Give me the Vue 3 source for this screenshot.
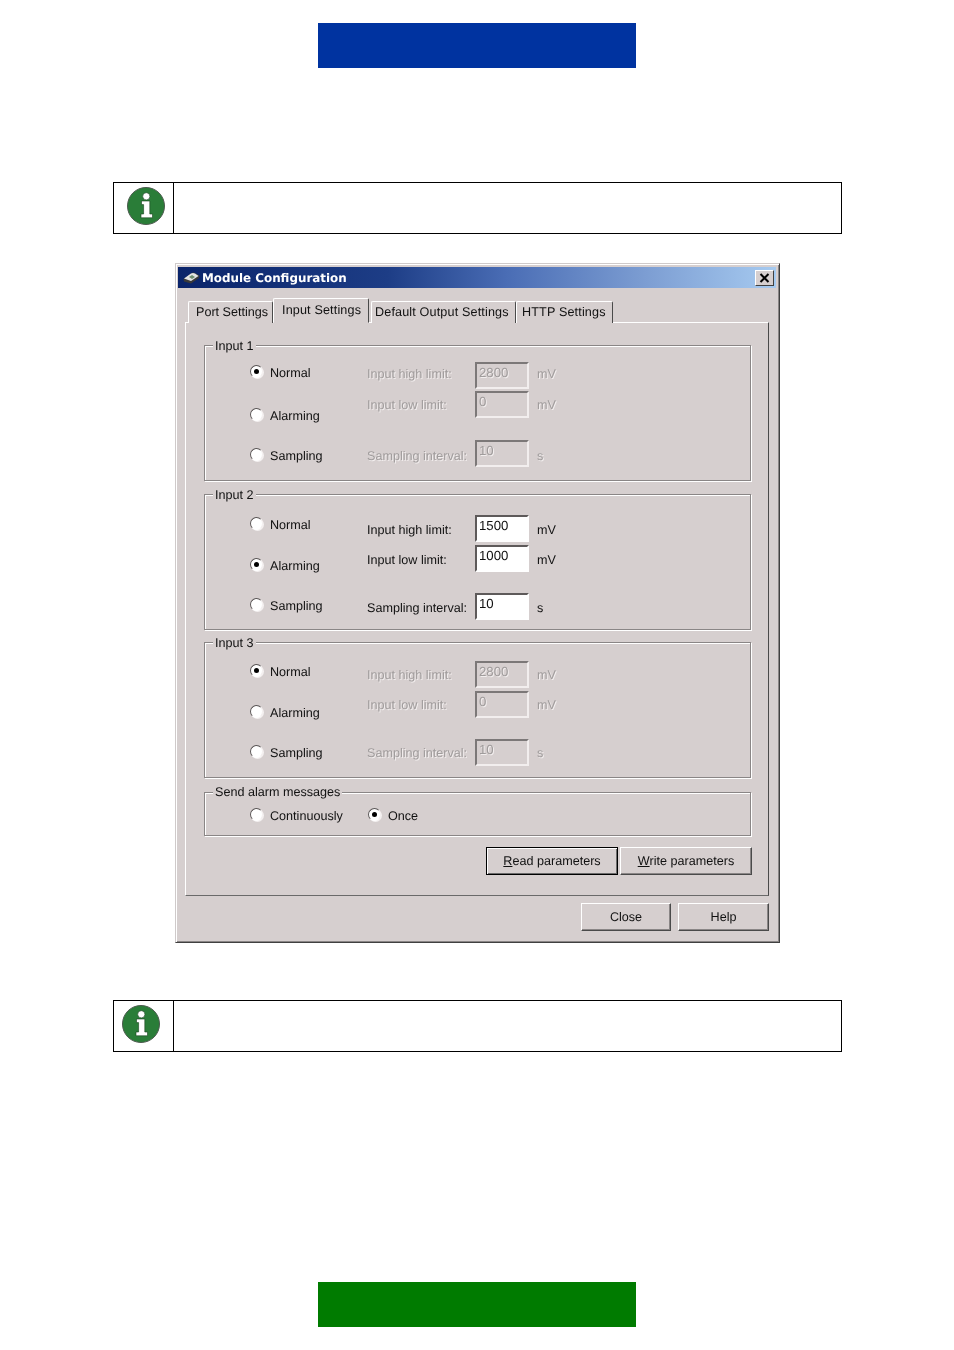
<script setup>
const groups = [
  {
    title: 'Input 1',
    disabled: true,
    radios: [
      { label: 'Normal', on: true, gap: 17 },
      { label: 'Alarming', gap: 23 },
      { label: 'Sampling', gap: 20 }
    ],
    fields: [
      { label: 'Input high limit:', value: '2800', unit: 'mV', gap: 16, up: 4, down: 0 },
      { label: 'Input low limit:', value: '0', unit: 'mV', gap: 2, up: 0, down: 0 },
      { label: 'Sampling interval:', value: '10', unit: 's', gap: 22, up: 0, down: 4 }
    ]
  },
  {
    title: 'Input 2',
    disabled: false,
    radios: [
      { label: 'Normal', gap: 20 },
      { label: 'Alarming', on: true, gap: 21 },
      { label: 'Sampling', gap: 20 }
    ],
    fields: [
      { label: 'Input high limit:', value: '1500', unit: 'mV', gap: 20, up: 0, down: 2 },
      { label: 'Input low limit:', value: '1000', unit: 'mV', gap: 3, up: 0, down: 2 },
      { label: 'Sampling interval:', value: '10', unit: 's', gap: 21, up: 0, down: 2 }
    ]
  },
  {
    title: 'Input 3',
    disabled: true,
    radios: [
      { label: 'Normal', on: true, gap: 19 },
      { label: 'Alarming', gap: 21 },
      { label: 'Sampling', gap: 20 }
    ],
    fields: [
      { label: 'Input high limit:', value: '2800', unit: 'mV', gap: 18, up: 0, down: 0 },
      { label: 'Input low limit:', value: '0', unit: 'mV', gap: 3, up: 0, down: 0 },
      { label: 'Sampling interval:', value: '10', unit: 's', gap: 21, up: 0, down: 0 }
    ]
  }
]

const tabs = [
  { label: 'Port Settings', width: 85, pad: 7 },
  { label: 'Input Settings', width: 96, pad: 8, active: true },
  { label: 'Default Output Settings', width: 145, pad: 3 },
  { label: 'HTTP Settings', width: 97, pad: 5 }
]

const textShift = (field) => ({
  paddingBottom: field.up + 'px',
  paddingTop: field.down + 'px'
})
</script>

<template>
  <div class="page">
    <div class="bar bar-blue"></div>

    <div class="note note-first">
      <div class="note-icon icon-a">
        <svg width="38" height="38" viewBox="0 0 38 38">
          <circle cx="19" cy="19" r="18.500" fill="#2a7d38" stroke="#4c5a4e" stroke-width="1" />
          <circle cx="19.300" cy="9.300" r="3.600" fill="#fff" stroke="#173f1c" stroke-width="0.6" />
          <path d="M14.500 14H22.800V27H25.500V30.800H14V27H16.600V17.600H14.500Z" fill="#fff" stroke="#173f1c" stroke-width="0.6" />
        </svg>
      </div>
    </div>

    <div class="window">
      <div class="titlebar">
        <svg class="app-icon" width="17" height="12" viewBox="0 0 17 12">
          <path d="M0.500 7 8 1.500Q10 0 12 1L16.500 3.500 16 6 8 11.500 1 9.500Z" fill="#3a3a3a" />
          <path d="M1 6.500 8 1.500Q10 0.500 12 1.500L15.500 4 8 9Z" fill="#e4e4e4" />
          <path d="M6 5 9 3 12 5 9 7Z" fill="#6f8f70" />
        </svg>
        <span class="title-text">Module Configuration</span>
        <div class="close-x">
          <svg width="11" height="10" viewBox="0 0 11 10">
            <path d="M1.500 1 9.500 9M9.500 1 1.500 9" stroke="#000" stroke-width="2" fill="none" />
          </svg>
        </div>
      </div>

      <div class="body">
        <div class="tabs">
          <div
            v-for="tab in tabs"
            :key="tab.label"
            :class="['tab', { active: tab.active }]"
            :style="{ width: tab.width + 'px', paddingLeft: tab.pad + 'px' }"
          >{{ tab.label }}</div>
        </div>

        <div class="panel">
          <div
            v-for="group in groups"
            :key="group.title"
            :class="['group', 'input-group', { off: group.disabled }]"
          >
            <span class="legend">{{ group.title }}</span>
            <div class="radio-col">
              <div
                v-for="radio in group.radios"
                :key="radio.label"
                class="radio"
                :style="{ marginTop: radio.gap + 'px' }"
              >
                <span class="radio-box"><i v-if="radio.on"></i></span>
                <span>{{ radio.label }}</span>
              </div>
            </div>
            <div class="field-col">
              <div
                v-for="field in group.fields"
                :key="field.label"
                class="field"
                :style="{ marginTop: field.gap + 'px' }"
              >
                <span class="field-label" :style="textShift(field)">{{ field.label }}</span>
                <div class="input">{{ field.value }}</div>
                <span class="unit" :style="textShift(field)">{{ field.unit }}</span>
              </div>
            </div>
          </div>

          <div class="group alarm-group">
            <span class="legend">Send alarm messages</span>
            <div class="radio radio-wide">
              <span class="radio-box"></span>
              <span>Continuously</span>
            </div>
            <div class="radio">
              <span class="radio-box"><i></i></span>
              <span>Once</span>
            </div>
          </div>

          <div class="panel-buttons">
            <div class="btn btn-default btn-param"><u>R</u>ead parameters</div>
            <div class="btn btn-param btn-write"><u>W</u>rite parameters</div>
          </div>
        </div>

        <div class="dialog-buttons">
          <div class="btn btn-close">Close</div>
          <div class="btn btn-help">Help</div>
        </div>
      </div>
    </div>

    <div class="note note-second">
      <div class="note-icon icon-b">
        <svg width="38" height="38" viewBox="0 0 38 38">
          <circle cx="19" cy="19" r="18.500" fill="#2a7d38" stroke="#4c5a4e" stroke-width="1" />
          <circle cx="19.300" cy="9.300" r="3.600" fill="#fff" stroke="#173f1c" stroke-width="0.6" />
          <path d="M14.500 14H22.800V27H25.500V30.800H14V27H16.600V17.600H14.500Z" fill="#fff" stroke="#173f1c" stroke-width="0.6" />
        </svg>
      </div>
    </div>

    <div class="bar bar-green"></div>
  </div>
</template>

<style scoped>
.page {
  width: 954px;
  padding-top: 23px;
  box-sizing: border-box;
}

.bar {
  width: 318px;
  height: 45px;
  margin-left: 318px;
}

.bar-blue {
  background: #0033a0;
}

.bar-green {
  margin-top: 230px;
  background: #007b00;
}

.note {
  width: 729px;
  height: 52px;
  margin-left: 113px;
  box-sizing: border-box;
  border: 1px solid #000;
  background: #fff;
}

.note-first {
  margin-top: 114px;
}

.note-second {
  margin-top: 57px;
}

.note-icon {
  width: 60px;
  height: 100%;
  box-sizing: border-box;
  border-right: 1px solid #000;
  display: flex;
}

.note-icon svg {
  display: block;
}

.icon-a {
  padding: 4px 0 0 13px;
}

.icon-b {
  padding: 4px 0 0 8px;
}

.window {
  width: 605px;
  height: 680px;
  margin: 29px 0 0 175px;
  box-sizing: border-box;
  padding: 3px 3px 0 2px;
  background: #d6cfcf;
  border: 1px solid;
  border-color: #cfcaca #404040 #404040 #cfcaca;
  box-shadow: inset 1px 1px 0 #fff, inset -1px -1px 0 #8a8686;
  font-family: "Liberation Sans", Arial, sans-serif;
  font-size: 12.6px;
  color: #111;
  text-rendering: geometricPrecision;
  filter: blur(0.3px);
}

.titlebar {
  height: 21px;
  display: flex;
  align-items: center;
  padding: 0 2px 0 5px;
  background: linear-gradient(90deg, #0a246a 0%, #1d3d86 35%, #4a6db5 55%, #7c9dd2 78%, #a6caf0 100%);
}

.app-icon {
  flex: none;
}

.title-text {
  margin-left: 2px;
  font-family: "DejaVu Sans", Verdana, sans-serif;
  font-weight: 700;
  font-size: 11.9px;
  color: #fff;
}

.close-x {
  width: 19px;
  height: 16px;
  margin-left: auto;
  box-sizing: border-box;
  display: flex;
  align-items: center;
  justify-content: center;
  background: #d6cfcf;
  border: 1px solid;
  border-color: #fff #404040 #404040 #fff;
}

.body {
  padding: 0 7px;
}

.tabs {
  height: 25px;
  margin: 10px 0 -1px 3px;
  display: flex;
  align-items: flex-end;
  position: relative;
  z-index: 1;
}

.tab {
  height: 22px;
  box-sizing: border-box;
  padding-top: 3px;
  border: 1px solid;
  border-color: #fff #4a4a4a #fff #fff;
  border-bottom: none;
  border-radius: 2px 2px 0 0;
  background: #d6cfcf;
  white-space: nowrap;
  letter-spacing: 0.15px;
}

.tab:first-child {
  letter-spacing: 0;
}

.tab.active {
  height: 25px;
  margin-right: 2px;
  padding-top: 4px;
  border-bottom: 1px solid #d6cfcf;
}

.panel {
  width: 584px;
  height: 574px;
  box-sizing: border-box;
  padding: 22px 0 0 18px;
  border: 1px solid;
  border-color: #fff #4a4a4a #6a6a6a #fff;
}

.group {
  width: 547px;
  box-sizing: border-box;
  position: relative;
  border: 1px solid #8a8686;
  box-shadow: 1px 1px 0 #fff, inset 1px 1px 0 #fff;
}

.input-group {
  height: 136px;
  display: flex;
  margin-bottom: 13px;
}

.input-group:nth-of-type(2) {
  margin-bottom: 12px;
}

.input-group:nth-of-type(3) {
  margin-bottom: 14px;
}

.legend {
  position: absolute;
  top: -8px;
  left: 8px;
  padding: 0 2px;
  background: #d6cfcf;
  line-height: 16px;
}

.alarm-group .legend {
  top: -9px;
}

.radio-col {
  width: 162px;
  padding-left: 45px;
  box-sizing: border-box;
  flex: none;
}

.radio {
  height: 20px;
  display: flex;
  align-items: center;
  gap: 7px;
}

.radio-box {
  width: 13px;
  height: 13px;
  box-sizing: border-box;
  flex: none;
  margin-bottom: 3px;
  display: flex;
  align-items: center;
  justify-content: center;
  background: #fff;
  border-radius: 50%;
  border: 1.500px solid;
  border-color: #5a5656 #f4f0f0 #fff #5a5656;
  box-shadow: 1px 1px 0 #f4f0f0;
}

.radio-box i {
  width: 5px;
  height: 5px;
  border-radius: 50%;
  background: #000;
}

.field {
  height: 27px;
  display: flex;
  align-items: center;
}

.field-label {
  width: 108px;
  flex: none;
  white-space: nowrap;
}

.input {
  width: 54px;
  height: 27px;
  box-sizing: border-box;
  flex: none;
  padding: 1px 0 0 2px;
  line-height: 16px;
  font-size: 13.2px;
  background: #fff;
  border: 2px solid;
  border-color: #5e5a5a #fff #fff #5e5a5a;
}

.unit {
  margin-left: 8px;
}

.off .field-label,
.off .unit,
.off .input {
  color: #a09c9c;
  text-shadow: 1px 1px 0 #f2eeee;
}

.off .input {
  background: #d6cfcf;
  border-color: #7c7878 #f2eeee #f2eeee #7c7878;
}

.alarm-group {
  height: 44px;
  display: flex;
  align-items: flex-start;
  padding: 13px 0 0 45px;
}

.radio-wide {
  width: 118px;
  flex: none;
}

.panel-buttons {
  width: 548px;
  margin-top: 11px;
  display: flex;
  justify-content: flex-end;
  gap: 2px;
}

.btn {
  height: 28px;
  box-sizing: border-box;
  display: flex;
  align-items: center;
  justify-content: center;
  background: #d6cfcf;
  border: 1px solid;
  border-color: #fff #4a4a4a #4a4a4a #fff;
  box-shadow: inset -1px -1px 0 #8a8686;
}

.btn-param {
  width: 132px;
}

.btn-default {
  border-color: #000;
  box-shadow: inset 1px 1px 0 #fff, inset -1px -1px 0 #6a6a6a;
}

.dialog-buttons {
  width: 584px;
  margin-top: 7px;
  display: flex;
  justify-content: flex-end;
  gap: 7px;
}

.btn-close {
  width: 90px;
}

.btn-help {
  width: 91px;
}
</style>

<style>
html,
body {
  background: #fff;
}
</style>
